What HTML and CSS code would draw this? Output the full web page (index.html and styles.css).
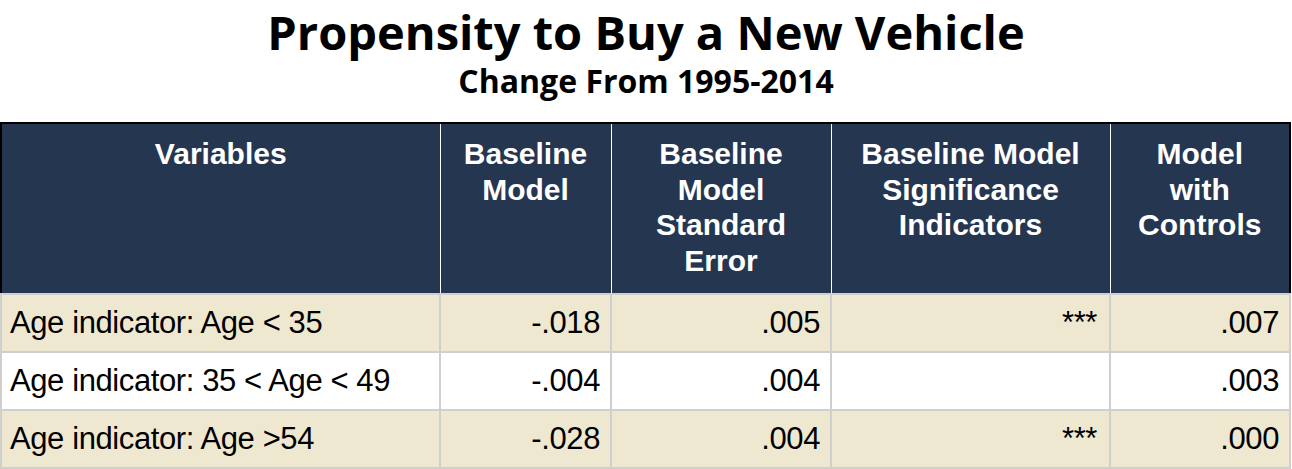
FILE: index.html
```html
<!DOCTYPE html>
<html>
<head>
<meta charset="utf-8">
<link rel="stylesheet" href="styles.css">
</head>
<body>
<div class="page">
  <header class="titles">
    <h1 class="title">Propensity to Buy a New Vehicle</h1>
    <h2 class="subtitle">Change From 1995-2014</h2>
  </header>
  <table class="data">
    <colgroup>
      <col class="c1"><col class="c2"><col class="c3"><col class="c4"><col class="c5">
    </colgroup>
    <thead>
      <tr>
        <th>Variables</th>
        <th>Baseline<br>Model</th>
        <th>Baseline<br>Model<br>Standard<br>Error</th>
        <th>Baseline Model<br>Significance<br>Indicators</th>
        <th>Model<br>with<br>Controls</th>
      </tr>
    </thead>
    <tbody>
      <tr class="alt">
        <td class="label">Age indicator: Age &lt; 35</td>
        <td>-.018</td><td>.005</td><td class="sig">***</td><td>.007</td>
      </tr>
      <tr>
        <td class="label">Age indicator: 35 &lt; Age &lt; 49</td>
        <td>-.004</td><td>.004</td><td class="sig"></td><td>.003</td>
      </tr>
      <tr class="alt">
        <td class="label">Age indicator: Age &gt;54</td>
        <td>-.028</td><td>.004</td><td class="sig">***</td><td>.000</td>
      </tr>
    </tbody>
  </table>
</div>
</body>
</html>
```

FILE: styles.css
```css
html, body {
  margin: 0;
  padding: 0;
  background: #ffffff;
}
.page {
  width: 1292px;
}
.titles {
  height: 122px;
  text-align: center;
  color: #000;
  font-family: "Open Sans", "Lato", sans-serif;
}
.title {
  margin: 0;
  padding-top: 0;
  font-size: 47px;
  line-height: 64px;
  font-weight: 700;
  letter-spacing: 0;
}
.subtitle {
  margin: 0;
  padding-top: 0;
  font-size: 32px;
  line-height: 34px;
  font-weight: 700;
}
.data {
  border-collapse: collapse;
  table-layout: fixed;
  width: 1291px;
  border: 2px solid #000;
}
.c1 { width: 439px; }
.c2 { width: 171px; }
.c3 { width: 220px; }
.c4 { width: 279px; }
.c5 { width: 180px; }
.data th {
  background: #253651;
  color: #ffffff;
  font-family: "Liberation Sans", Arial, sans-serif;
  font-weight: bold;
  font-size: 30px;
  line-height: 35.5px;
  height: 171px;
  vertical-align: top;
  padding: 12px 2px 0;
  box-sizing: border-box;
  border-left: 1px solid #ffffff;
  text-align: center;
}
.data th:first-child { border-left: none; }
.data td {
  font-family: "Liberation Sans", Arial, sans-serif;
  font-size: 31px;
  letter-spacing: -0.4px;
  height: 58px;
  padding: 0 10px 0 8px;
  box-sizing: border-box;
  text-align: right;
  vertical-align: middle;
  color: #000;
  background: #ffffff;
  border: 2px solid #cfcfcf;
}
.data tr.alt td { background: #efe8d1; }
.data td.label { text-align: left; }
.data td.sig {
  padding-right: 12px;
}
```
